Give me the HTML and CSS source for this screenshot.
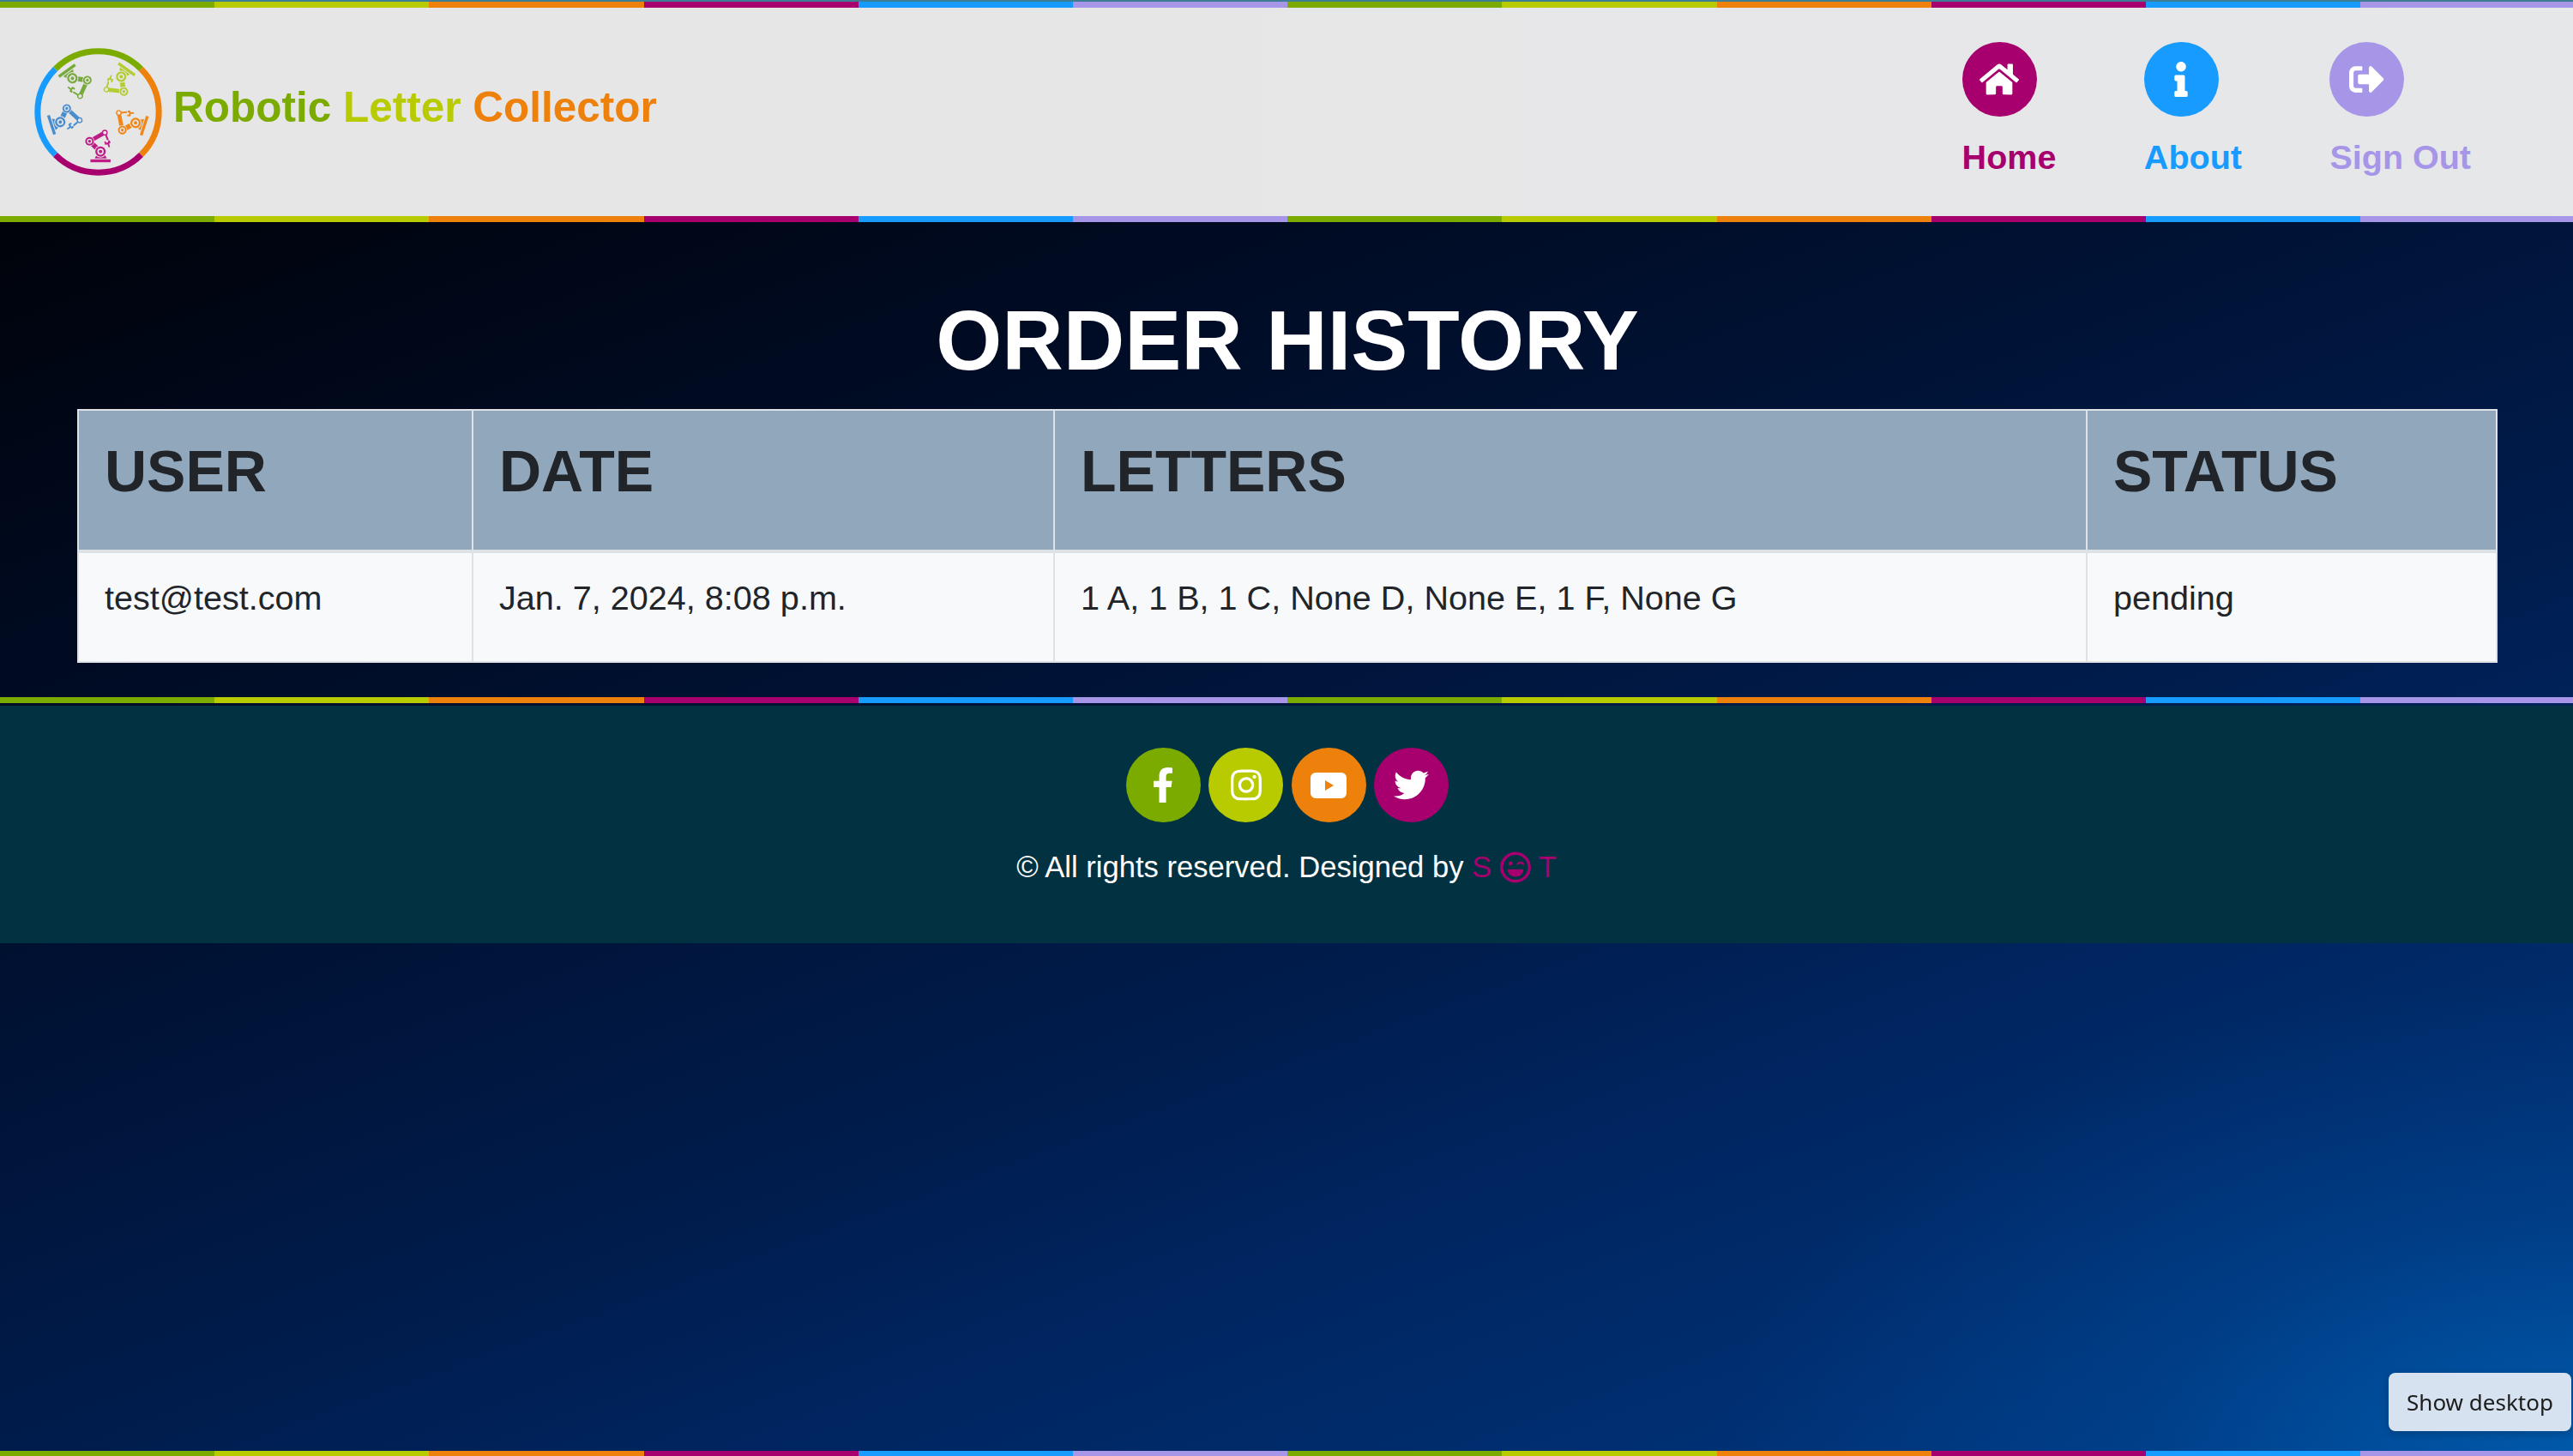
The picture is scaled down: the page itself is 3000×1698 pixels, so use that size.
FILE: index.html
```html
<!DOCTYPE html>
<html lang="en">
<head>
<meta charset="utf-8">
<title>Order History - Robotic Letter Collector</title>
<link rel="stylesheet" href="styles.css">
</head>
<body>
<header class="site-header">
  <div class="stripe"></div>
  <div class="header-row">
    <a class="brand" href="#">
      <svg class="logo" viewBox="60 48 444 444" aria-hidden="true">
        <defs>
          <g id="robot">
            <rect x="255" y="435" width="70" height="10"/>
            <path d="M270 432h42l-7-14h-28z"/>
            <path d="M290 408L252 372" class="arm-a"/>
            <path d="M252 372L305 342" class="arm-b"/>
            <path d="M305 342L316 368" class="arm-c"/>
            <path d="M303 374l5-3 1 6 8-1-1-6 6-1 3 8-5 3 3 12-5 1-3-10-9 1z"/>
            <circle cx="290" cy="408" r="21" class="gap"/>
            <circle cx="290" cy="408" r="18"/>
            <circle cx="290" cy="408" r="11" class="gap"/>
            <circle cx="290" cy="408" r="6"/>
            <circle cx="252" cy="372" r="17" class="gap"/>
            <circle cx="252" cy="372" r="15"/>
            <circle cx="252" cy="372" r="9" class="gap"/>
            <circle cx="252" cy="372" r="5"/>
            <circle cx="305" cy="342" r="10"/>
            <circle cx="305" cy="342" r="6" class="gap"/>
          </g>
        </defs>
        <use href="#robot" class="robot-magenta"/>
        <use href="#robot" class="robot-orange" transform="translate(-4 3) rotate(-72 282 270)"/>
        <use href="#robot" class="robot-lime" transform="translate(5 -6) rotate(-144 282 270)"/>
        <use href="#robot" class="robot-green" transform="translate(-2 -10) rotate(144 282 270)"/>
        <use href="#robot" class="robot-blue" transform="translate(-3 -15) rotate(72 282 270)"/>
        <path class="ring ring-green" d="M133 121A211 211 0 0 1 431 121"/>
        <path class="ring ring-orange" d="M431 121A211 211 0 0 1 431 419"/>
        <path class="ring ring-magenta" d="M431 419A211 211 0 0 1 133 419"/>
        <path class="ring ring-blue" d="M133 419A211 211 0 0 1 133 121"/>
      </svg>
      <span class="brand-name"><span class="c-green">Robotic</span> <span class="c-lime">Letter</span> <span class="c-orange">Collector</span></span>
    </a>
    <nav class="main-nav">
      <a class="nav-item c-magenta" href="#">
        <span class="icon-circle bg-magenta">
          <svg class="icon i-home" viewBox="0 0 576 512"><path d="M280.37 148.26L96 300.11V464a16 16 0 0 0 16 16l112.06-.29a16 16 0 0 0 15.92-16V368a16 16 0 0 1 16-16h64a16 16 0 0 1 16 16v95.64a16 16 0 0 0 16 16.05L464 480a16 16 0 0 0 16-16V300L295.67 148.26a12.19 12.19 0 0 0-15.3 0zM571.6 251.47L488 182.56V44.05a12 12 0 0 0-12-12h-56a12 12 0 0 0-12 12v72.61L318.47 43a48 48 0 0 0-61 0L4.34 251.47a12 12 0 0 0-1.6 16.9l25.5 31A12 12 0 0 0 45.15 301l235.22-193.74a12.19 12.19 0 0 1 15.3 0L530.9 301a12 12 0 0 0 16.9-1.6l25.5-31a12 12 0 0 0-1.7-16.93z"/></svg>
        </span>
        <span class="nav-label">Home</span>
      </a>
      <a class="nav-item c-blue" href="#">
        <span class="icon-circle bg-blue">
          <svg class="icon i-info" viewBox="0 0 192 512"><path d="M20 424.229h20V279.771H20c-11.046 0-20-8.954-20-20V212c0-11.046 8.954-20 20-20h112c11.046 0 20 8.954 20 20v212.229h20c11.046 0 20 8.954 20 20V492c0 11.046-8.954 20-20 20H20c-11.046 0-20-8.954-20-20v-47.771c0-11.046 8.954-20 20-20zM96 0C56.235 0 24 32.235 24 72s32.235 72 72 72 72-32.235 72-72S135.764 0 96 0z"/></svg>
        </span>
        <span class="nav-label">About</span>
      </a>
      <a class="nav-item c-lavender" href="#">
        <span class="icon-circle bg-lavender">
          <svg class="icon i-signout" viewBox="0 0 512 512"><path d="M497 273L329 441c-15 15-41 4.5-41-17v-96H152c-13.3 0-24-10.7-24-24v-96c0-13.3 10.7-24 24-24h136V88c0-21.4 25.9-32 41-17l168 168c9.3 9.4 9.3 24.6 0 34zM192 436v-40c0-6.6-5.4-12-12-12H96c-17.7 0-32-14.3-32-32V160c0-17.7 14.3-32 32-32h84c6.6 0 12-5.4 12-12V76c0-6.6-5.4-12-12-12H96c-53 0-96 43-96 96v192c0 53 43 96 96 96h84c6.6 0 12-5.4 12-12z"/></svg>
        </span>
        <span class="nav-label">Sign Out</span>
      </a>
    </nav>
  </div>
  <div class="stripe"></div>
</header>

<main class="content">
  <h1 class="page-title">ORDER HISTORY</h1>
  <table class="orders">
    <colgroup>
      <col class="col-user"><col class="col-date"><col class="col-letters"><col class="col-status">
    </colgroup>
    <thead>
      <tr><th>USER</th><th>DATE</th><th>LETTERS</th><th>STATUS</th></tr>
    </thead>
    <tbody>
      <tr>
        <td>test@test.com</td>
        <td>Jan. 7, 2024, 8:08 p.m.</td>
        <td>1 A, 1 B, 1 C, None D, None E, 1 F, None G</td>
        <td>pending</td>
      </tr>
    </tbody>
  </table>
</main>

<div class="stripe"></div>
<footer class="site-footer">
  <div class="socials">
    <a class="icon-circle bg-green" href="#"><svg class="icon i-fb" viewBox="0 0 320 512"><path d="M279.14 288l14.22-92.66h-88.91v-60.13c0-25.35 12.42-50.06 52.24-50.06h40.42V6.26S260.43 0 225.36 0c-73.22 0-121.08 44.38-121.08 124.72v70.62H22.89V288h81.39v224h100.17V288z"/></svg></a>
    <a class="icon-circle bg-lime" href="#"><svg class="icon i-ig" viewBox="0 0 448 512"><path d="M224.1 141c-63.6 0-114.9 51.3-114.9 114.9s51.3 114.9 114.9 114.9S339 319.5 339 255.9 287.7 141 224.1 141zm0 189.6c-41.1 0-74.7-33.5-74.7-74.7s33.5-74.7 74.7-74.7 74.7 33.5 74.7 74.7-33.6 74.7-74.7 74.7zm146.4-194.3c0 14.9-12 26.8-26.8 26.8-14.9 0-26.8-12-26.8-26.8s12-26.8 26.8-26.8 26.8 12 26.8 26.8zm76.1 27.2c-1.7-35.9-9.9-67.7-36.2-93.9-26.2-26.2-58-34.4-93.9-36.2-37-2.1-147.9-2.1-184.9 0-35.8 1.7-67.6 9.9-93.9 36.1s-34.4 58-36.2 93.9c-2.1 37-2.1 147.9 0 184.9 1.7 35.9 9.9 67.7 36.2 93.9s58 34.4 93.9 36.2c37 2.1 147.9 2.1 184.9 0 35.9-1.7 67.7-9.9 93.9-36.2 26.2-26.2 34.4-58 36.2-93.9 2.1-37 2.1-147.8 0-184.8zM398.8 388c-7.8 19.6-22.9 34.7-42.6 42.6-29.5 11.7-99.5 9-132.1 9s-102.7 2.6-132.1-9c-19.6-7.8-34.7-22.9-42.6-42.6-11.7-29.5-9-99.5-9-132.1s-2.6-102.7 9-132.1c7.8-19.6 22.9-34.7 42.6-42.6 29.5-11.7 99.5-9 132.1-9s102.7-2.6 132.1 9c19.6 7.8 34.7 22.9 42.6 42.6 11.7 29.5 9 99.5 9 132.1s2.7 102.7-9 132.1z"/></svg></a>
    <a class="icon-circle bg-orange" href="#"><svg class="icon i-yt" viewBox="0 0 42 30"><path fill-rule="evenodd" d="M6 0h30a6 6 0 0 1 6 6v18a6 6 0 0 1-6 6H6a6 6 0 0 1-6-6V6a6 6 0 0 1 6-6zM17 9v12l10-6z"/></svg></a>
    <a class="icon-circle bg-magenta" href="#"><svg class="icon i-tw" viewBox="0 0 512 512"><path d="M459.37 151.716c.325 4.548.325 9.097.325 13.645 0 138.72-105.583 298.558-298.558 298.558-59.452 0-114.68-17.219-161.137-47.106 8.447.974 16.568 1.299 25.34 1.299 49.055 0 94.213-16.568 130.274-44.832-46.132-.975-84.792-31.188-98.112-72.772 6.498.974 12.995 1.624 19.818 1.624 9.421 0 18.843-1.3 27.614-3.573-48.081-9.747-84.143-51.98-84.143-102.985v-1.299c13.969 7.797 30.214 12.67 47.431 13.319-28.264-18.843-46.781-51.005-46.781-87.391 0-19.492 5.197-37.36 14.294-52.954 51.655 63.675 129.3 105.258 216.365 109.807-1.624-7.797-2.599-15.918-2.599-24.04 0-57.828 46.782-104.934 104.934-104.934 30.213 0 57.502 12.67 76.67 33.137 23.715-4.548 46.456-13.32 66.599-25.34-7.798 24.366-24.366 44.833-46.132 57.827 21.117-2.273 41.584-8.122 60.426-16.243-14.292 20.791-32.161 39.308-52.628 54.253z"/></svg></a>
  </div>
  <p class="copyright">© All rights reserved. Designed by <span class="c-magenta designer">S <svg class="i-wink" viewBox="0 0 496 512"><path d="M248 8C111 8 0 119 0 256s111 248 248 248 248-111 248-248S385 8 248 8zm141.4 389.4c-37.8 37.8-88 58.6-141.4 58.6s-103.6-20.8-141.4-58.6S48 309.4 48 256s20.8-103.6 58.6-141.4S194.6 56 248 56s103.6 20.8 141.4 58.6S448 202.6 448 256s-20.8 103.6-58.6 141.4zM328 164c-25.7 0-55.9 16.9-59.9 42.1-1.7 11.2 11.5 18.2 19.8 10.8l9.5-8.5c14.8-13.2 46.2-13.2 61 0l9.5 8.5c8.5 7.4 21.6.3 19.8-10.8-3.8-25.2-34-42.1-59.7-42.1zm-160 60c17.7 0 32-14.3 32-32s-14.3-32-32-32-32 14.3-32 32 14.3 32 32 32zm194.4 64H133.6c-8.2 0-14.5 7-13.5 15 7.5 59.2 58.9 105 121.1 105h13.6c62.2 0 113.6-45.8 121.1-105 1-8-5.3-15-13.5-15z"/></svg> T</span></p>
</footer>

<div class="page-end">
  <div class="stripe stripe-bottom"></div>
</div>
<div class="show-desktop">Show desktop</div>
</body>
</html>
```
FILE: styles.css
```css
* { box-sizing: border-box; }
html, body { height: 100%; }
body {
  margin: 0;
  height: 1698px;
  overflow: hidden;
  display: flex;
  flex-direction: column;
  font-family: "Liberation Sans", Arial, sans-serif;
  color: #fff;
  background:
    radial-gradient(ellipse 1000px 560px at 100% 100%, rgba(0, 96, 178, .8) 0%, rgba(0, 76, 155, .4) 50%, rgba(0, 60, 140, 0) 100%),
    linear-gradient(160deg, #000000 2%, #000718 20%, #00102f 39%, #001c4c 61%, #002560 72%, #002c6c 82%, #003c88 100%);
}
a { text-decoration: none; color: inherit; }

.stripe {
  height: 7px;
  flex: none;
  background: repeating-linear-gradient(90deg,
    #7cab00 0 250.2px, #b8cb00 250.2px 500.4px, #ee810c 500.4px 750.6px,
    #a7006e 750.6px 1000.8px, #189bff 1000.8px 1251px, #a796e8 1251px 1501.2px);
}
.c-green { color: #7cab00; }
.c-lime { color: #b8cb00; }
.c-orange { color: #ee810c; }
.c-magenta { color: #a7006e; }
.c-blue { color: #189bff; }
.c-lavender { color: #a796e8; }
.bg-green { background: #7cab00; }
.bg-lime { background: #b8cb00; }
.bg-orange { background: #ee810c; }
.bg-magenta { background: #a7006e; }
.bg-blue { background: #189bff; }
.bg-lavender { background: #a796e8; }

.site-header {
  flex: none;
  border-top: 2px solid #3d7e94;
  background: linear-gradient(90deg, #e6e6e6, #e6e7e9);
}
.header-row {
  height: 243px;
  display: flex;
  justify-content: space-between;
  padding: 0 119px 0 40px;
}
.brand { display: flex; align-items: center; gap: 13px; }
.logo { width: 149px; height: 149px; flex: none; }
.ring { fill: none; stroke-width: 21; }
.ring-green { stroke: #7cab00; }
.ring-orange { stroke: #ee810c; }
.ring-magenta { stroke: #a7006e; }
.ring-blue { stroke: #189bff; }
.robot-magenta { color: #bd1c87; }
.robot-orange { color: #f0871a; }
.robot-lime { color: #b4cb32; }
.robot-green { color: #77aa3a; }
.robot-blue { color: #488dcd; }
#robot { fill: currentColor; stroke: none; }
.gap { fill: #e6e6e6; }
.arm-a { stroke: currentColor; stroke-width: 17; fill: none; }
.arm-b { stroke: currentColor; stroke-width: 14; fill: none; }
.arm-c { stroke: currentColor; stroke-width: 6; fill: none; }
.brand-name {
  font-size: 49.5px;
  font-weight: 700;
  white-space: nowrap;
  position: relative;
  top: -6px;
}

.main-nav { display: flex; gap: 102.5px; padding-top: 40px; }
.nav-item { display: flex; flex-direction: column; gap: 24px; align-items: flex-start; }
.nav-label { font-size: 39.5px; font-weight: 700; line-height: 46px; white-space: nowrap; }
.icon-circle {
  width: 87px;
  height: 87px;
  flex: none;
  border-radius: 50%;
  display: flex;
  align-items: center;
  justify-content: center;
}
.icon { fill: #fff; display: block; }
.i-home { width: 46px; height: 41px; }
.i-info { width: 16px; height: 41px; }
.i-signout { width: 41px; height: 41px; }
.i-fb { width: 26px; height: 41px; }
.i-ig { width: 36px; height: 41px; }
.i-yt { width: 42px; height: 30px; }
.i-tw { width: 41px; height: 41px; }

.content { flex: none; padding: 0 88px 40px 90px; }
.page-title {
  margin: 0;
  height: 218px;
  padding-top: 83px;
  text-align: center;
  font-size: 99px;
  line-height: 110px;
  font-weight: 700;
}
.orders {
  width: 100%;
  table-layout: fixed;
  border-collapse: collapse;
  color: #212529;
}
.col-user { width: 460px; }
.col-date { width: 678px; }
.col-letters { width: 1204px; }
.orders th, .orders td {
  border: 2px solid #dee2e6;
  text-align: left;
  padding-left: 30px;
  padding-right: 30px;
}
.orders th {
  background: #91a7bc;
  border-bottom-width: 4px;
  font-size: 68px;
  font-weight: 700;
  line-height: 100px;
  padding-top: 20px;
  padding-bottom: 42px;
}
.orders td {
  background: #f8f9fa;
  font-size: 39.6px;
  line-height: 46px;
  padding-top: 29px;
  padding-bottom: 51px;
}

.site-footer {
  flex: none;
  margin-top: 3px;
  height: 277px;
  padding-top: 49px;
  background: #023241;
  display: flex;
  flex-direction: column;
  align-items: center;
}
.socials { display: flex; gap: 9.5px; padding-left: 2px; }
.copyright {
  margin: 30px 0 0;
  font-size: 34.6px;
  line-height: 44px;
  white-space: nowrap;
}
.i-wink { width: 36px; height: 37px; fill: currentColor; vertical-align: -7px; }

.page-end {
  flex: 1;
  display: flex;
  flex-direction: column;
  justify-content: flex-end;
}
.stripe-bottom { height: 6px; }

.show-desktop {
  position: fixed;
  right: 2px;
  bottom: 29px;
  width: 213px;
  height: 68px;
  display: flex;
  align-items: center;
  justify-content: center;
  background: #d6e2f0;
  border-radius: 8px;
  box-shadow: 0 3px 10px rgba(0, 0, 0, .2);
  color: #1c1c1c;
  font-family: "Noto Sans", "Open Sans", sans-serif;
  font-size: 26px;
}
```
